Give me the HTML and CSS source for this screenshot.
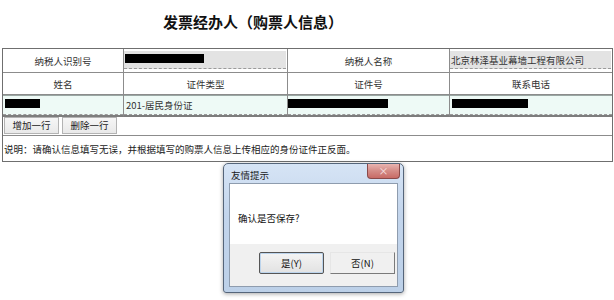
FILE: index.html
```html
<!DOCTYPE html>
<html lang="zh-CN">
<head>
<meta charset="utf-8">
<title>发票经办人</title>
<link rel="stylesheet" href="styles.css">
</head>
<body>
<h1 class="title">发票经办人（购票人信息）</h1>
<div class="form">
  <div class="cell label">纳税人识别号</div>
  <div class="cell"><div class="field gray"><span class="mask" style="width:79px"></span></div></div>
  <div class="cell label">纳税人名称</div>
  <div class="cell last"><div class="field gray">北京林泽基业幕墙工程有限公司</div></div>

  <div class="cell label">姓名</div>
  <div class="cell label">证件类型</div>
  <div class="cell label">证件号</div>
  <div class="cell label last">联系电话</div>

  <div class="cell row3"><div class="field cyan"><span class="mask" style="width:35px"></span></div></div>
  <div class="cell row3"><div class="field cyan">201-居民身份证</div></div>
  <div class="cell row3"><div class="field cyan flush"><span class="mask" style="width:100px"></span></div></div>
  <div class="cell row3 last"><div class="field cyan"><span class="mask" style="width:76px"></span></div></div>

  <div class="cell actions span">
    <button class="btn">增加一行</button>
    <button class="btn">删除一行</button>
  </div>
  <div class="cell note span">说明：请确认信息填写无误，并根据填写的购票人信息上传相应的身份证件正反面。</div>
</div>

<div class="dialog">
  <div class="dlg-titlebar">
    <span class="dlg-title">友情提示</span>
    <span class="dlg-close">×</span>
  </div>
  <div class="dlg-client">
    <div class="dlg-body">确认是否保存?</div>
    <div class="dlg-buttons">
      <button class="dlg-btn default">是(Y)</button>
      <button class="dlg-btn flat">否(N)</button>
    </div>
  </div>
</div>
</body>
</html>
```

FILE: styles.css
```css
* { box-sizing: border-box; }
html, body {
  margin: 0;
  padding: 0;
  background: #fff;
  font-family: "Noto Sans CJK SC", "Noto Sans", sans-serif;
  color: #222;
}
body { width: 614px; height: 300px; overflow: hidden; position: relative; }

.title {
  margin: 0;
  height: 48px;
  padding: 12px 0 0 163px;
  font-size: 15px;
  line-height: 20px;
  font-weight: bold;
  color: #111;
  letter-spacing: 0;
}

.form {
  margin-left: 2px;
  width: 611px;
  border: 1px solid #6f6f6f;
  display: grid;
  grid-template-columns: 121px 164px 162px 162px;
  grid-template-rows: 24px 22px 22px 19px 25px;
  font-size: 9.5px;
}
.cell {
  border-right: 1px solid #8c8c8c;
  border-bottom: 1px solid #8c8c8c;
  display: flex;
  align-items: center;
  overflow: hidden;
}
.cell.last { border-right: none; }
.cell.span { grid-column: 1 / -1; border-right: none; }
.cell.note { border-bottom: none; padding-left: 1px; color: #222; }
.label { justify-content: center; color: #333; }

.field {
  width: 100%;
  display: flex;
  align-items: center;
  border-bottom: 1px dashed #9a9a9a;
  color: #333;
}
.field.gray {
  background: #e3e3e3;
  height: 18px;
  margin: 0 1px 1px 0;
  padding-left: 1px;
}
.field.cyan {
  background: #eefaf6;
  height: 100%;
  padding: 0 0 1px 2px;
  border-top: 1px solid #9aa7a3;
}
.field.cyan.flush { padding-left: 0; }
.row3 { align-items: stretch; border-bottom: 2px solid #7d7d7d; }

.mask {
  display: block;
  height: 9px;
  background: #000;
  margin-bottom: 2px;
}

.actions {
  padding-left: 1px;
  gap: 3px;
  align-items: stretch;
  padding-top: 0;
  padding-bottom: 1px;
}
.btn {
  font-family: inherit;
  font-size: 9.5px;
  color: #222;
  background: linear-gradient(#f6f6f6, #e9e9e9);
  border: 1px solid #b3b3b3;
  padding: 0;
  width: 55px;
  height: 17px;
  line-height: 15px;
}

/* dialog */
.dialog {
  position: absolute;
  left: 223px;
  top: 163px;
  width: 181px;
  height: 130px;
  border: 1px solid #55657a;
  border-radius: 5px 5px 3px 3px;
  background: linear-gradient(#d6e4f5 0%, #c3d5ec 40%, #bcd0e8 100%);
  box-shadow: 0 1px 4px rgba(0,0,0,0.35);
  padding: 0 5px 5px 5px;
  display: flex;
  flex-direction: column;
}
.dlg-titlebar {
  height: 19px;
  display: flex;
  align-items: center;
  justify-content: space-between;
  position: relative;
}
.dlg-title {
  font-size: 9.5px;
  color: #1a1a1a;
  padding-left: 2px;
  padding-top: 3px;
}
.dlg-close {
  position: absolute;
  right: -2px;
  top: 0;
  width: 33px;
  height: 15px;
  border: 1px solid #8a4a4a;
  border-top: none;
  border-radius: 0 0 4px 4px;
  background: linear-gradient(#e9b4b0, #d48b86 50%, #c86b66);
  color: #f6e2e2;
  font-size: 10px;
  line-height: 13px;
  text-align: center;
}
.dlg-client {
  flex: 1;
  border: 1px solid #8e9cae;
  background: #f0f0f0;
  display: flex;
  flex-direction: column;
}
.dlg-body {
  background: #fff;
  height: 60px;
  font-size: 9.5px;
  color: #111;
  padding: 27px 0 0 8px;
}
.dlg-buttons {
  flex: 1;
  display: flex;
  align-items: flex-start;
  justify-content: flex-end;
  gap: 6px;
  padding: 8px 2px 0 0;
}
.dlg-btn {
  font-family: inherit;
  font-size: 9.5px;
  color: #111;
  width: 65px;
  height: 22px;
  padding: 0;
  background: linear-gradient(#f4f4f4, #e2e2e2);
  border: 1px solid #9a9a9a;
  border-radius: 2px;
}
.dlg-btn.default {
  border: 1px solid #555;
  box-shadow: inset 0 0 0 1px #bcd4ec;
}
.dlg-btn.flat {
  background: #f0f0f0;
  border-color: #e6e6e6 #7a7a7a #7a7a7a #e6e6e6;
  border-radius: 0;
}
```
